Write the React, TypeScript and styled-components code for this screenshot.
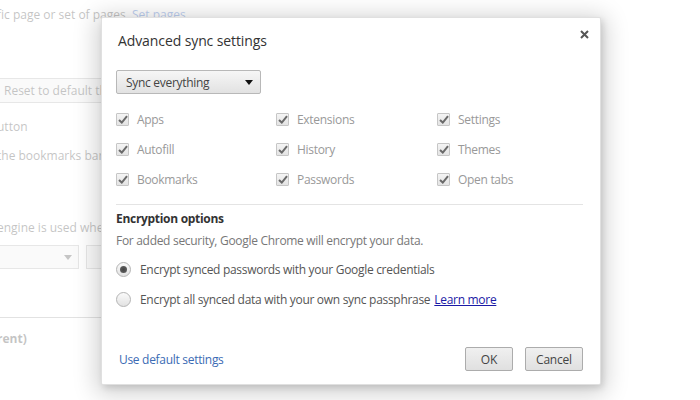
import React from "react";
import styled, { createGlobalStyle } from "styled-components";

const Global = createGlobalStyle`
  html, body { margin: 0; padding: 0; }
  body {
    width: 700px; height: 400px; overflow: hidden; background: #fff;
    font-family: "Open Sans", "Noto Sans", sans-serif;
  }
`;

const Page = styled.div`
  position: relative;
  width: 700px;
  height: 400px;
  overflow: hidden;
  background: #fff;
`;

/* ---------- faded background settings page ---------- */
const BgPage = styled.div`
  display: flex;
  flex-direction: column;
  width: 520px;
  font-size: 12px;
  color: #303030;
  opacity: 0.28;
  white-space: nowrap;
`;

const BgLine = styled.div<{ $top?: number; $bold?: boolean }>`
  margin-top: ${(p) => p.$top ?? 0}px;
  height: 18px;
  line-height: 18px;
  font-weight: ${(p) => (p.$bold ? 700 : 400)};
  text-indent: -3px;
`;

const BgLink = styled.span`
  color: #1155cc;
`;

const BgButton = styled.div<{ $top: number }>`
  margin-top: ${(p) => p.$top}px;
  width: 120px;
  height: 25px;
  box-sizing: border-box;
  border: 1px solid #aaa;
  border-left: none;
  background: #eee;
  line-height: 23px;
  padding-left: 4px;
`;

const BgRow = styled.div<{ $top: number }>`
  margin-top: ${(p) => p.$top}px;
  display: flex;
  gap: 7px;
`;

const BgSelect = styled.div`
  width: 79px;
  height: 24px;
  box-sizing: border-box;
  border: 1px solid #aaa;
  border-left: none;
  background: #eee;
  display: flex;
  justify-content: flex-end;
  align-items: center;
  padding-right: 6px;
  &::after {
    content: "";
    border-left: 4px solid transparent;
    border-right: 4px solid transparent;
    border-top: 5px solid #333;
  }
`;

const BgSmallBtn = styled.div`
  width: 40px;
  height: 24px;
  box-sizing: border-box;
  border: 1px solid #aaa;
  background: #eee;
`;

const BgRule = styled.div<{ $top: number; $w: number }>`
  margin-top: ${(p) => p.$top}px;
  width: ${(p) => p.$w}px;
  height: 1px;
  background: #999;
`;

/* ---------- dialog ---------- */
const Dialog = styled.div`
  position: absolute;
  left: 101px;
  top: 17px;
  width: 500px;
  height: 368px;
  box-sizing: border-box;
  background: #fff;
  border: 1px solid rgba(0, 0, 0, 0.12);
  box-shadow: 0 4px 23px 5px rgba(0, 0, 0, 0.18), 2px 3px 6px rgba(0, 0, 0, 0.12);
  border-radius: 2px;
  display: flex;
  flex-direction: column;
  padding: 13px 17px 13px 14px;
  font-size: 12px;
  letter-spacing: -0.3px;
  color: #444;
`;

const Title = styled.h1`
  margin: 0 0 0 2px;
  font-size: 14px;
  font-weight: 400;
  letter-spacing: -0.1px;
  line-height: 20px;
  height: 20px;
  color: #333;
`;

const Close = styled.button`
  position: absolute;
  right: 8px;
  top: 8px;
  width: 16px;
  height: 16px;
  padding: 0;
  border: none;
  background: transparent;
  display: flex;
  align-items: center;
  justify-content: center;
`;

const Select = styled.div`
  margin-top: 19px;
  width: 145px;
  height: 24px;
  box-sizing: border-box;
  border: 1px solid #b8b8b8;
  border-radius: 2px;
  background: linear-gradient(#f6f6f6, #e2e2e2);
  display: flex;
  align-items: center;
  justify-content: space-between;
  padding: 0 7px 0 9px;
  color: #444;
  &::after {
    content: "";
    border-left: 4px solid transparent;
    border-right: 4px solid transparent;
    border-top: 5px solid #111;
  }
`;

const Grid = styled.div`
  margin-top: 10px;
  display: grid;
  grid-template-columns: 160px 161px 1fr;
  grid-auto-rows: 30px;
`;

const CheckItem = styled.label`
  display: flex;
  align-items: center;
  gap: 8px;
  color: #999;
`;

const Box = styled.span`
  width: 13px;
  height: 13px;
  box-sizing: border-box;
  border: 1px solid #c6c6c6;
  border-radius: 1px;
  background: linear-gradient(#f4f4f4, #e4e4e4);
  display: flex;
  align-items: center;
  justify-content: center;
`;

const Rule = styled.div`
  margin-top: 10px;
  height: 1px;
  background: #e4e4e4;
`;

const SectionTitle = styled.div`
  margin-top: 5px;
  height: 18px;
  line-height: 18px;
  font-weight: 700;
  color: #333;
`;

const Desc = styled.div`
  margin-top: 4px;
  height: 18px;
  line-height: 18px;
  color: #777;
`;

const Radios = styled.div`
  margin-top: 4px;
  display: flex;
  flex-direction: column;
`;

const RadioItem = styled.label`
  height: 30px;
  display: flex;
  align-items: center;
  gap: 9px;
  color: #555;
`;

const Radio = styled.span<{ $on?: boolean }>`
  width: 15px;
  height: 15px;
  box-sizing: border-box;
  border-radius: 50%;
  border: 1px solid #b4b4b4;
  background: linear-gradient(#fafafa, #e2e2e2);
  display: flex;
  align-items: center;
  justify-content: center;
  &::after {
    content: "";
    display: ${(p) => (p.$on ? "block" : "none")};
    width: 7px;
    height: 7px;
    border-radius: 50%;
    background: radial-gradient(#444, #666);
  }
`;

const LearnMore = styled.a`
  margin-left: 4px;
  color: #1a1aa6;
  text-decoration: underline;
`;

const Footer = styled.div`
  margin-top: auto;
  display: flex;
  align-items: center;
`;

const DefaultLink = styled.a`
  margin-left: 3px;
  color: #3b6bb4;
  text-decoration: none;
`;

const Buttons = styled.div`
  margin-left: auto;
  display: flex;
  gap: 12px;
`;

const Button = styled.button<{ $w: number }>`
  width: ${(p) => p.$w}px;
  height: 24px;
  border: 1px solid #acacac;
  border-radius: 2px;
  background: linear-gradient(#f0f0f0, #e0e0e0);
  font-family: inherit;
  font-size: 12px;
  letter-spacing: -0.2px;
  color: #444;
  padding: 0;
`;

const Check = () => (
  <svg width="10" height="9" viewBox="0 0 10 9">
    <path d="M1 5 L3.8 7.6 L9 1.2" fill="none" stroke="#6a6a6a" strokeWidth="2" />
  </svg>
);

const items = ["Apps", "Extensions", "Settings", "Autofill", "History", "Themes", "Bookmarks", "Passwords", "Open tabs"];

export default function App() {
  return (
    <Page>
      <Global />
      <BgPage>
        <BgLine $top={6}>
          fic page or set of pages. <BgLink>Set pages</BgLink>
        </BgLine>
        <BgButton $top={54}>Reset to default theme</BgButton>
        <BgLine $top={15}>utton</BgLine>
        <BgLine $top={11}>the bookmarks bar</BgLine>
        <BgLine $top={54}>engine is used when searching from the omnibox.</BgLine>
        <BgRow $top={8}>
          <BgSelect />
          <BgSmallBtn />
        </BgRow>
        <BgRule $top={48} $w={110} />
        <BgLine $top={12} $bold>
          rent)
        </BgLine>
      </BgPage>

      <Dialog>
        <Close aria-label="Close">
          <svg width="9" height="9" viewBox="0 0 9 9">
            <path d="M1 1 L8 8 M8 1 L1 8" stroke="#555" strokeWidth="2" />
          </svg>
        </Close>
        <Title>Advanced sync settings</Title>
        <Select>Sync everything</Select>
        <Grid>
          {items.map((t) => (
            <CheckItem key={t}>
              <Box>
                <Check />
              </Box>
              {t}
            </CheckItem>
          ))}
        </Grid>
        <Rule />
        <SectionTitle>Encryption options</SectionTitle>
        <Desc>For added security, Google Chrome will encrypt your data.</Desc>
        <Radios>
          <RadioItem>
            <Radio $on />
            Encrypt synced passwords with your Google credentials
          </RadioItem>
          <RadioItem>
            <Radio />
            <span>
              Encrypt all synced data with your own sync passphrase
              <LearnMore href="#">Learn more</LearnMore>
            </span>
          </RadioItem>
        </Radios>
        <Footer>
          <DefaultLink href="#">Use default settings</DefaultLink>
          <Buttons>
            <Button $w={48}>OK</Button>
            <Button $w={58}>Cancel</Button>
          </Buttons>
        </Footer>
      </Dialog>
    </Page>
  );
}
